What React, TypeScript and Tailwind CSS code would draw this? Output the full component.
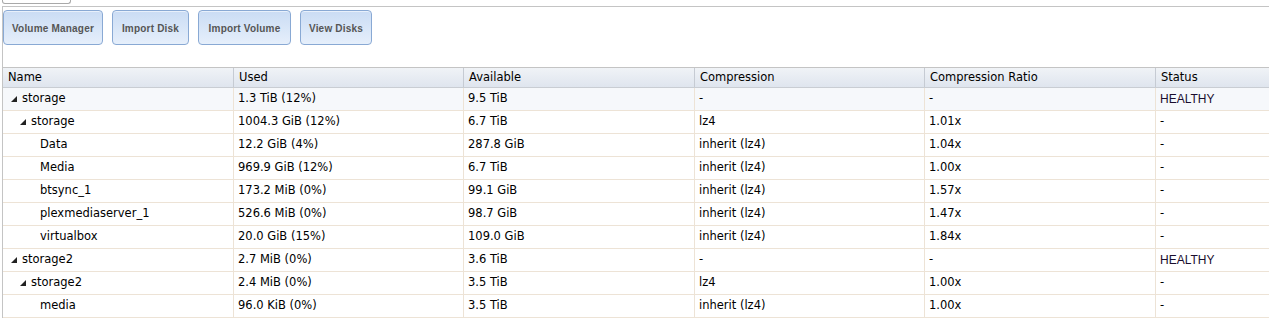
import React from 'react';

type Row = {
	name: string;
	level: number;
	expandable?: boolean;
	used: string;
	available: string;
	compression: string;
	ratio: string;
	status: string;
};

const rows: Row[] = [
	{ name: 'storage', level: 0, expandable: true, used: '1.3 TiB (12%)', available: '9.5 TiB', compression: '-', ratio: '-', status: 'HEALTHY' },
	{ name: 'storage', level: 1, expandable: true, used: '1004.3 GiB (12%)', available: '6.7 TiB', compression: 'lz4', ratio: '1.01x', status: '-' },
	{ name: 'Data', level: 2, used: '12.2 GiB (4%)', available: '287.8 GiB', compression: 'inherit (lz4)', ratio: '1.04x', status: '-' },
	{ name: 'Media', level: 2, used: '969.9 GiB (12%)', available: '6.7 TiB', compression: 'inherit (lz4)', ratio: '1.00x', status: '-' },
	{ name: 'btsync_1', level: 2, used: '173.2 MiB (0%)', available: '99.1 GiB', compression: 'inherit (lz4)', ratio: '1.57x', status: '-' },
	{ name: 'plexmediaserver_1', level: 2, used: '526.6 MiB (0%)', available: '98.7 GiB', compression: 'inherit (lz4)', ratio: '1.47x', status: '-' },
	{ name: 'virtualbox', level: 2, used: '20.0 GiB (15%)', available: '109.0 GiB', compression: 'inherit (lz4)', ratio: '1.84x', status: '-' },
	{ name: 'storage2', level: 0, expandable: true, used: '2.7 MiB (0%)', available: '3.6 TiB', compression: '-', ratio: '-', status: 'HEALTHY' },
	{ name: 'storage2', level: 1, expandable: true, used: '2.4 MiB (0%)', available: '3.5 TiB', compression: 'lz4', ratio: '1.00x', status: '-' },
	{ name: 'media', level: 2, used: '96.0 KiB (0%)', available: '3.5 TiB', compression: 'inherit (lz4)', ratio: '1.00x', status: '-' },
];

const headers = ['Name', 'Used', 'Available', 'Compression', 'Compression Ratio', 'Status'];
const buttons = [
	{ label: 'Volume Manager', w: 'w-[100px]' },
	{ label: 'Import Disk', w: 'w-[77px]' },
	{ label: 'Import Volume', w: 'w-[93px]' },
	{ label: 'View Disks', w: 'w-[72px]' },
];

const indent = ['pl-[8px]', 'pl-[17px]', 'pl-[37px]'];

function Arrow() {
	return (
		<svg width="6" height="6" viewBox="0 0 6 6" className="mr-[5px] shrink-0">
			<polygon points="6,0 6,6 0,6" fill="#222" />
		</svg>
	);
}

export default function App() {
	return (
		<div className="h-[319px] w-[1269px] overflow-hidden bg-white font-['DejaVu_Sans',sans-serif] text-[11.5px] text-black">
			<div className="h-[6px]">
				<div className="ml-[2px] h-[4px] w-[69px] rounded-b-[3px] border-x border-b border-[#a9a9a9]" />
			</div>
			<div className="ml-[2px] border-l border-t border-[#c4c4c4]">
				<div className="flex pt-[3px] pb-[22px]">
					{buttons.map((b, i) => (
						<button
							key={b.label}
							className={`${b.w} ${i > 0 ? 'ml-[9px]' : ''} h-[35px] rounded-[4px] border border-[#89a9d4] bg-gradient-to-b from-[#cadcf4] to-[#e6effb] pt-[1px] font-['Liberation_Sans',sans-serif] text-[10px] font-bold tracking-[0.2px] text-[#555] shadow-[inset_0_1px_0_#e8f0fb]`}
						>
							{b.label}
						</button>
					))}
				</div>
				<div className="border-t border-[#c4c4c4]">
					<div className="grid h-[20px] grid-cols-[230px_230px_231px_230px_231px_1fr] border-b border-[#c9cdd3] bg-gradient-to-b from-[#f0f3f7] to-[#dfe5ee]">
						{headers.map((h, i) => (
							<div
								key={h}
								className={`flex items-center pl-[5px] ${i > 0 ? 'border-l border-[#c6cbd3] pl-[4px]' : ''}`}
							>
								{h}
							</div>
						))}
					</div>
					{rows.map((r, idx) => {
						const cells = [r.used, r.available, r.compression, r.ratio, r.status];
						return (
							<div
								key={idx}
								className={`grid h-[23px] grid-cols-[230px_230px_231px_230px_231px_1fr] border-b border-[#ede3d6] ${idx === 0 ? 'bg-[#f6f8fb]' : ''}`}
							>
								<div className={`flex items-center ${indent[r.level]}`}>
									{r.expandable ? <Arrow /> : null}
									<span>{r.name}</span>
								</div>
								{cells.map((c, i) => (
									<div
										key={i}
										className={`flex items-center border-l border-[#ede3d6] pl-[4px] ${
											c === 'HEALTHY' ? "font-['Liberation_Sans',sans-serif] text-[12px] text-[#1a0d2e]" : ''
										}`}
									>
										{c}
									</div>
								))}
							</div>
						);
					})}
				</div>
			</div>
		</div>
	);
}
